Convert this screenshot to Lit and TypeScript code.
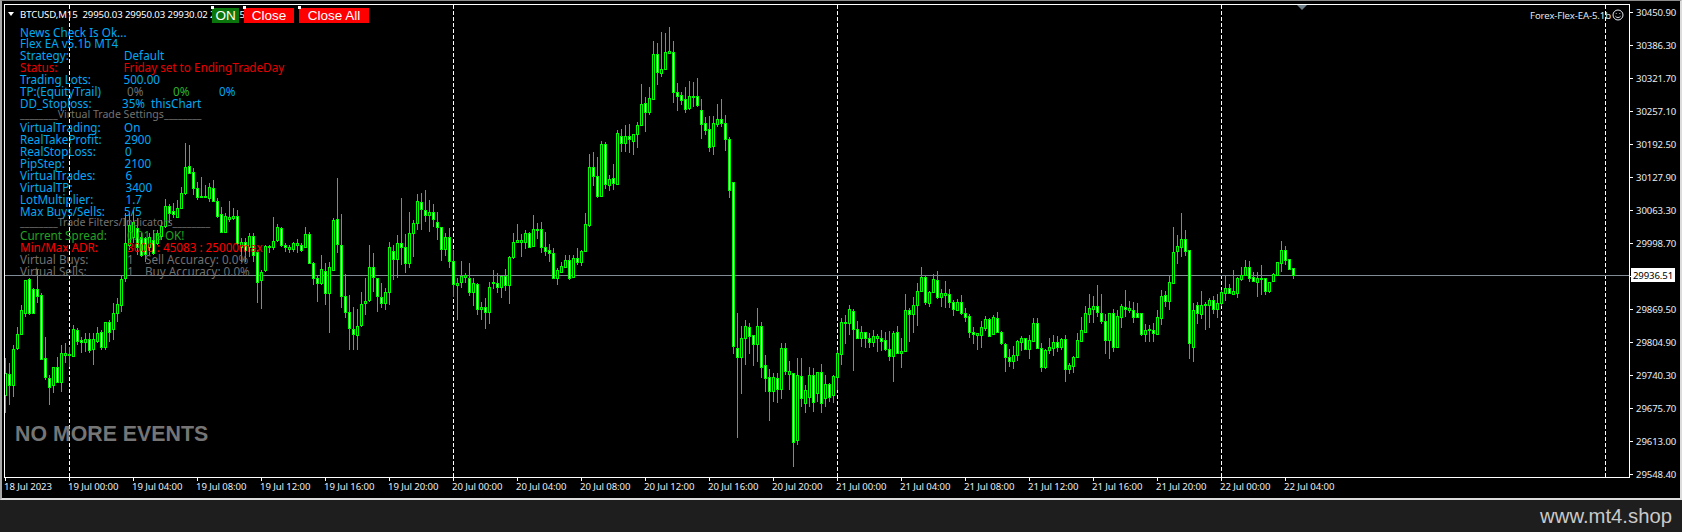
import { LitElement, html, css, svg } from "lit";
import { customElement } from "lit/decorators.js";

type C = [number, number, number, number, number];
// each candle: high, body top, body bottom, low, white fill; y in 3x crop units
const SEG_A: C[] = [
    [685,730,795,850,0],[700,733,765,825,1],[645,657,765,800,0],[590,612,655,660,0],[525,540,612,615,0],[450,450,548,560,0],[445,448,548,555,1],[475,477,548,550,1],[420,478,497,520,1],[490,495,687,690,1],
    [620,685,742,750,1],[735,745,770,825,1],[710,712,765,790,0],[680,712,757,760,1],[645,670,757,785,0],[640,670,674,700,0],[650,673,676,710,0],[585,597,678,680,0],[595,600,632,645,1],[620,630,636,670,1],
    [610,628,635,665,0],[610,627,660,670,1],[610,627,658,705,0],[590,610,632,640,0],[600,607,650,660,1],[575,577,650,660,0],[570,577,607,635,1],[520,550,598,630,0],[505,522,550,575,0],[435,447,526,545,0],
    [250,340,445,455,0],[250,285,345,360,0],[240,275,320,340,0],[265,295,350,375,1],[310,320,375,380,1],[320,325,372,395,1],[310,320,352,375,0],[300,330,368,375,1],[300,310,340,345,0],[270,288,317,330,0],
    [207,228,288,295,0],[222,228,250,280,1],[220,243,252,265,1],[210,235,262,265,0],[170,190,233,235,0],[40,112,190,195,0],[45,108,128,130,1],[115,127,175,195,1],[155,175,200,210,1],[140,198,201,205,0],
    [165,197,200,205,0],[160,172,203,215,0],[150,173,212,215,1],[205,213,257,265,1],[230,253,305,310,1],[250,258,305,310,0],[212,260,266,275,0],[235,258,265,270,0],[240,258,340,345,1],[325,335,350,395,0],
    [325,337,360,395,1],[310,317,350,380,0],[310,317,375,395,1],[360,365,455,520,1],[420,427,450,537,0],[345,348,420,425,0],[345,348,352,370,0],[262,332,352,360,0],[282,292,330,335,0],[290,294,345,350,1],
    [340,344,352,365,1],[345,352,356,370,0],[335,340,356,365,0],[328,340,344,370,0],[340,344,360,365,1],[290,313,352,355,0],[305,313,398,400,1],[395,398,445,465,1],[435,445,460,515,1],
    [375,418,460,465,0],[400,422,490,525,1],[395,412,490,610,0],[265,270,420,422,0],[145,268,342,370,1],[252,344,498,535,1],[432,497,545,565,1],[495,545,595,660,1],[530,598,612,660,1],[538,587,615,660,0],
    [487,523,585,590,0],[445,512,520,555,0],[345,410,510,515,0],[370,412,442,485,1],[445,445,498,545,1],[460,500,520,535,1],[475,485,520,540,0],[335,352,487,525,0],[345,362,388,450,1],[315,338,388,445,0],
    [205,338,350,405,1],[312,350,400,430,1],[247,310,400,415,0],[270,280,310,380,0],[193,214,280,300,0],[190,215,238,300,1],[180,240,254,275,1],[210,245,254,305,0],[222,245,268,290,1],[247,275,292,330,1],
    [290,292,358,392,1],[310,322,358,378,0],[295,322,394,415,1],[360,394,463,500,1],[445,458,466,570,0],[393,437,457,475,0],[430,436,440,458,0],[400,443,487,497,1],[445,458,487,527,0],[460,461,538,555,1],
    [515,530,538,570,0],[503,532,547,597,1],[455,470,547,582,0],[420,457,460,477,0],[430,458,470,490,1],[437,437,470,503,0],[418,437,466,482,1],[378,382,466,522,0],[310,335,382,387,0],[282,331,335,338,0],
    [312,331,335,380,0],[300,310,335,357,0],[305,310,350,352,1],[255,298,347,347,0],[280,297,299,326,0],[277,298,352,370,1],[307,350,362,378,1],[343,361,368,395,1],[355,368,445,447,1],[415,420,443,465,0],
    [395,408,425,428,0],[376,391,410,413,0],[376,391,443,450,1],[376,385,440,443,0],[353,385,395,405,1],[360,364,395,408,0],[250,283,364,365,0],[72,112,284,290,0],[66,112,137,168,1],[82,137,197,205,1],
    [33,43,197,197,0],[37,43,163,178,1],[135,148,165,183,0],[102,145,160,180,1],[0,10,161,161,0],
];
const SEG_D: C[] = [
    [327,347,370,395,1],[315,348,370,395,0],[312,349,358,398,1],[342,343,362,405,0],[307,316,343,385,0],[192,253,316,318,0],[232,250,275,337,1],[202,235,275,285,0],[63,103,236,236,0],[68,103,157,195,1],
    [37,148,158,172,0],[40,97,148,150,0],[22,94,98,102,0],[63,95,215,248,1],[190,215,227,272,1],[215,226,240,255,1],[200,238,267,278,1],[183,229,265,270,0],[186,229,231,262,0],[175,229,255,260,1],
    [237,271,311,357,1],[292,310,330,345,1],[288,327,380,397,1],[288,310,377,405,0],[252,298,312,322,0],[237,298,310,320,1],[285,310,358,392,1],[350,358,510,535,1],
];
const SEG_E: C[] = [
    [65,65,557,582,1],[460,565,590,833,1],[498,535,590,702,0],[480,499,535,615,0],[488,502,527,582,1],[525,526,552,618,1],[445,499,552,606,0],[486,499,620,654,1],[585,616,653,696,1],[627,652,692,783,1],
    [640,650,692,726,0],[640,653,686,729,1],[550,565,686,717,0],
];
const SEG_B: C[] = [
  [280,295,362,375,1],[333,362,373,420,0],[370,370,576,651,1],[325,376,570,585,0],[323,377,445,470,1],[405,420,460,490,0],[352,375,440,470,0],[354,375,455,485,1],[365,367,430,455,0],[342,367,460,490,1],
  [375,403,445,470,0],[400,403,440,455,1],[375,378,435,460,0],[300,310,380,420,0],[205,217,311,345,0],[195,217,219,282,0],[165,178,218,255,0],[178,183,238,362,1],[213,238,263,265,1],[228,247,263,290,0],
  [245,247,263,293,1],[250,263,275,295,1],[240,259,275,292,0],[253,259,265,305,0],[240,263,272,302,1],[247,270,298,302,1],[243,298,317,332,1],[243,250,317,395,0],[228,247,308,312,1],[265,302,308,353,0],
  [132,181,302,303,0],[175,181,193,275,1],[140,166,191,250,0],[100,124,166,228,0],[52,82,124,127,0],[78,82,157,165,1],[123,127,160,170,0],[72,88,127,127,0],[63,91,140,148,1],[117,130,140,170,0],
  [94,130,134,175,0],[118,133,155,175,1],[150,155,178,197,1],[148,157,180,182,0],[135,157,190,195,1],[175,190,200,215,1],[192,198,245,263,1],[232,245,253,282,1],[250,250,254,300,0],[212,232,254,293,0],
  [198,208,233,243,0],[205,208,257,260,1],[195,200,253,255,0],[186,203,245,245,1],[243,245,280,285,1],[280,281,320,365,1],[297,322,332,350,1],[288,316,332,357,0],[270,274,316,333,0],[257,265,275,302,0],
  [265,265,297,300,1],[255,271,297,327,0],[205,220,272,275,0],[205,220,293,297,1],[280,293,352,365,1],[298,300,352,357,0],[265,292,300,312,0],[255,277,293,318,0],[258,277,290,305,1],[265,268,290,300,0],
  [255,268,356,395,1],[340,346,356,372,0],[318,322,347,370,0],[250,271,322,325,0],
];
const SEG_C: C[] = [
  [950,991,1022,1027,0],[918,940,995,995,0],[882,925,941,970,0],[888,919,926,970,0],[855,919,935,950,1],[882,940,962,972,1],[942,964,1020,1062,1],[938,940,1020,1077,0],[927,940,1040,1055,1],[930,949,1041,1043,0],
  [912,919,950,985,0],[870,921,928,950,1],[903,925,929,938,0],[906,929,950,970,1],[908,940,950,955,1],[940,940,1001,1008,1],[973,989,1001,1026,0],[975,988,991,1026,0],[970,989,998,1026,1],[930,952,1001,1002,0],
  [870,889,953,975,0],[873,886,902,922,1],[826,847,902,930,0],[682,757,848,850,0],[706,739,752,792,0],[640,718,740,770,0],[690,718,752,768,1],[750,751,1028,1077,1],[910,931,1040,1086,0],[905,916,940,972,1],
  [873,916,941,958,0],[905,912,916,990,0],[895,901,914,984,0],[888,901,926,942,1],[882,910,926,954,0],[870,877,908,918,0],[826,865,878,904,0],[852,865,878,882,1],[810,874,881,884,0],[832,835,878,894,0],
  [801,826,836,842,0],[780,802,826,828,0],[783,802,834,846,1],[816,832,842,844,1],[816,835,845,890,0],[796,835,838,885,0],[834,835,872,884,1],[846,847,872,880,0],[820,823,842,843,0],[786,787,824,826,0],
  [723,751,788,816,0],[738,751,780,795,1],[777,778,806,808,1],[804,805,826,836,1],
];

interface Bar { hi: number; top: number; bot: number; lo: number; white: boolean; }

function toBars(): Bar[] {
  const out: Bar[] = [];
  const add = (c: C, y0: number) => {
    const f = (v: number) => Math.round(y0 + v / 3);
    out.push({ hi: f(c[0]), top: f(c[1]), bot: f(c[2]), lo: f(c[3]), white: c[4] === 1 });
  };
  SEG_A.forEach((c) => add(c, 130));
  SEG_D.forEach((c) => add(c, 20));
  SEG_E.forEach((c) => add(c, 160));
  SEG_B.forEach((c) => add(c, 250));
  SEG_C.forEach((c) => add(c, 0));
  return out;
}

const BARS = toBars();
const GREEN = "#00ff00";
const WICK = "#00e400";

function candles() {
  return BARS.map((b, i) => {
    const x = 5 + 4 * i;
    const h = Math.max(b.bot - b.top, 1);
    return svg`<rect x=${x} y=${b.hi} width="1" height=${Math.max(b.lo - b.hi, 1)} fill=${WICK}></rect>
      <rect x=${x - 1} y=${b.top} width="3" height=${h + 1} fill=${GREEN}></rect>
      ${h > 1 ? svg`<rect x=${x} y=${b.top + 1} width="1" height=${h - 1} fill=${b.white ? "#ffffff" : "#000000"}></rect>` : null}`;
  });
}

type Cell = { x: number; t: string; c?: string };
type Row = { cells: Cell[]; kind?: string };
const BLUE = "b", RED = "r", REDD = "rd", GRN = "g", GRY = "y", LGR = "lg";
const rows: Row[] = [
  { kind: "first", cells: [{ x: 20, t: "News Check Is Ok...", c: BLUE }] },
  { cells: [{ x: 20, t: "Flex EA v5.1b MT4", c: BLUE }] },
  { cells: [{ x: 20, t: "Strategy:", c: BLUE }, { x: 124, t: "Default", c: BLUE }] },
  { cells: [{ x: 20, t: "Status:", c: REDD }, { x: 123.5, t: "Friday set to EndingTradeDay", c: REDD }] },
  { cells: [{ x: 20, t: "Trading Lots:", c: BLUE }, { x: 123.5, t: "500.00", c: BLUE }] },
  { cells: [{ x: 20, t: "TP:(EquityTrail)", c: BLUE }, { x: 127, t: "0%", c: GRY }, { x: 173, t: "0%", c: LGR }, { x: 219, t: "0%", c: BLUE }] },
  { cells: [{ x: 20, t: "DD_Stoploss:", c: BLUE }, { x: 122, t: "35%", c: BLUE }, { x: 151, t: "thisChart", c: BLUE }] },
  { kind: "sep", cells: [{ x: 20, t: "Virtual Trade Settings" }] },
  { cells: [{ x: 20, t: "VirtualTrading:", c: BLUE }, { x: 124, t: "On", c: BLUE }] },
  { cells: [{ x: 20, t: "RealTakeProfit:", c: BLUE }, { x: 124.5, t: "2900", c: BLUE }] },
  { cells: [{ x: 20, t: "RealStopLoss:", c: BLUE }, { x: 125, t: "0", c: BLUE }] },
  { cells: [{ x: 20, t: "PipStep:", c: BLUE }, { x: 124.5, t: "2100", c: BLUE }] },
  { cells: [{ x: 20, t: "VirtualTrades:", c: BLUE }, { x: 125.5, t: "6", c: BLUE }] },
  { cells: [{ x: 20, t: "VirtualTP:", c: BLUE }, { x: 125.5, t: "3400", c: BLUE }] },
  { cells: [{ x: 20, t: "LotMultiplier:", c: BLUE }, { x: 125.5, t: "1.7", c: BLUE }] },
  { cells: [{ x: 20, t: "Max Buys/Sells:", c: BLUE }, { x: 124, t: "5/5", c: BLUE }] },
  { kind: "sep", cells: [{ x: 20, t: "Trade Filters/Indicators" }] },
  { cells: [{ x: 20, t: "Current Spread:", c: GRN }, { x: 127, t: "0.01 is OK!", c: GRN }] },
  { cells: [{ x: 20, t: "Min/Max ADR:", c: RED }, { x: 127, t: "3000 : 45083 : 25000max", c: RED }] },
  { cells: [{ x: 20, t: "Virtual Buys:", c: GRY }, { x: 127, t: "1", c: GRY }, { x: 145, t: "Sell Accuracy: 0.0%", c: GRY }] },
  { cells: [{ x: 20, t: "Virtual Sells:", c: GRY }, { x: 127, t: "1", c: GRY }, { x: 145, t: "Buy Accuracy: 0.0%", c: GRY }] },
];

const prices = ["30450.90","30386.30","30321.70","30257.10","30192.50","30127.90","30063.30","29998.70","","29869.50","29804.90","29740.30","29675.70","29613.00","29548.40"];
const times: string[] = ["18 Jul 2023"];
["19", "20", "21"].forEach((d) => ["00:00","04:00","08:00","12:00","16:00","20:00"].forEach((h) => times.push(`${d} Jul ${h}`)));
times.push("22 Jul 00:00", "22 Jul 04:00");
const DASH_X = [69, 453, 837, 1221, 1605];

@customElement("app-root")
export class AppRoot extends LitElement {
  static styles = css`
    :host { display: block; width: 1682px; height: 532px; background: #1e1e1e; overflow: hidden; font-family: "Noto Sans", sans-serif; }
    .window { box-sizing: border-box; height: 500px; background: #000; display: flex; border-top: 1px solid #8c8c8c; border-left: 2px solid #a8a8a8; border-right: 2px solid #dcdcdc; border-bottom: 2px solid #dcdcdc; }
    .left { width: 1628px; flex: none; padding: 3px 0 0 2px; box-sizing: border-box; display: flex; flex-direction: column; }
    .plot { position: relative; width: 1626px; height: 474px; flex: none; box-sizing: border-box; border: 1px solid #fff; overflow: hidden; }
    .plot svg { display: block; }
    .times { display: flex; padding-left: 1px; color: #e6edf5; font-size: 9.6px; letter-spacing: -0.1px; }
    .time { width: 64px; flex: none; white-space: nowrap; }
    .tick { width: 1px; height: 3px; background: #fff; }
    .time span { display: block; margin-left: -1px; line-height: 12px; }
    .axis { position: relative; width: 50px; flex: none; display: flex; flex-direction: column; gap: 22px; padding-top: 6px; color: #e6edf5; font-size: 9.6px; letter-spacing: -0.1px; }
    .price { height: 11px; display: flex; align-items: center; gap: 3px; }
    .ptick { width: 3px; height: 1px; background: #fff; flex: none; }
    .current { position: absolute; left: 1px; top: 267px; width: 44px; height: 14px; background: #fff; color: #000; display: flex; align-items: center; justify-content: center; font-size: 9.6px; }
    .head { position: absolute; left: 3px; top: 2px; height: 14px; display: flex; align-items: center; color: #fff; font-size: 9.6px; white-space: pre; letter-spacing: -0.1px; }
    .tri { width: 0; height: 0; border-left: 3.5px solid transparent; border-right: 3.5px solid transparent; border-top: 4px solid #fff; margin-right: 6px; }
    .btns { position: absolute; left: 207px; top: 3px; display: flex; font-family: "Liberation Sans", sans-serif; font-size: 13.5px; color: #fff; }
    .btn { position: relative; height: 15px; line-height: 15px; text-align: center; }
    .btn::before { content: ""; position: absolute; left: -1px; top: -2px; width: 3px; height: 3px; background: #fff; }
    .on { width: 27px; background: #0a750a; margin-right: 5px; }
    .close { width: 50px; background: #f00; margin-right: 5px; }
    .closeall { width: 70px; background: #f00; }
    .ea { position: absolute; right: 5px; top: 3px; display: flex; align-items: center; gap: 1px; color: #dfe6ee; font-size: 9.6px; letter-spacing: -0.1px; height: 14px; }
    .mark { position: absolute; left: 1292px; top: 0; width: 0; height: 0; border-left: 5px solid transparent; border-right: 5px solid transparent; border-top: 5px solid #6f7f8a; }
    .panel { position: absolute; left: -5px; top: 21px; display: flex; flex-direction: column; font-size: 11.7px; }
    .row { height: 12px; line-height: 12px; display: flex; white-space: nowrap; padding-left: 20px; }
    .row.first { height: 11px; }
    .cell { flex: none; }
    .b { color: #00a8f4; } .r { color: #ff0000; } .rd { color: #e60000; } .g { color: #22a322; } .y { color: #707070; } .lg { color: #2fb52f; }
    .sep { color: #727272; font-size: 10.6px; line-height: 10px; }
    .events { position: absolute; left: 10px; top: 419px; font: bold 21.33px/20px "Liberation Sans", sans-serif; color: #757575; }
    .foot { height: 32px; display: flex; align-items: center; justify-content: flex-end; padding-right: 10px; color: #c9c9c9; font: 20.3px "Liberation Sans", sans-serif; }
  `;

  render() {
    return html`
      <div class="window">
        <div class="left">
          <div class="plot">
            <svg width="1624" height="472" viewBox="5 5 1624 472" shape-rendering="crispEdges">
              ${DASH_X.map((x) => svg`<line x1=${x + 0.5} x2=${x + 0.5} y1="5" y2="477" stroke="#fff" stroke-dasharray="4 2"></line>`)}
              <rect x="5" y="275" width="1624" height="1" fill="#808b96"></rect>
              ${candles()}
            </svg>
            <div class="mark"></div>
            <div class="head"><span class="tri"></span>BTCUSD,M15  29950.03 29950.03 29930.02 29936.51</div>
            <div class="btns">
              <div class="btn on">ON</div>
              <div class="btn close">Close</div>
              <div class="btn closeall">Close All</div>
            </div>
            <div class="ea">Forex-Flex-EA-5.1b
              <svg width="12" height="12" viewBox="0 0 12 12" fill="none" stroke="#e6edf5" shape-rendering="geometricPrecision">
                <circle cx="6" cy="6" r="5"></circle>
                <circle cx="4.2" cy="4.6" r="0.5" fill="#e6edf5" stroke="none"></circle>
                <circle cx="7.8" cy="4.6" r="0.5" fill="#e6edf5" stroke="none"></circle>
                <path d="M3.4 7.2C4.4 9 7.6 9 8.6 7.2" stroke-width="0.9"></path>
              </svg>
            </div>
            <div class="panel">${rows.map((r) => this.renderRow(r))}</div>
            <div class="events">NO MORE EVENTS</div>
          </div>
          <div class="times">
            ${times.map((t) => html`<div class="time"><div class="tick"></div><span>${t}</span></div>`)}
          </div>
        </div>
        <div class="axis">
          ${prices.map((p) => html`<div class="price"><div class="ptick"></div><span>${p}</span></div>`)}
          <div class="current">29936.51</div>
        </div>
      </div>
      <div class="foot">www.mt4.shop</div>
    `;
  }

  renderRow(r: Row) {
    if (r.kind === "sep") {
      return html`<div class="row sep">________${r.cells[0].t}________</div>`;
    }
    return html`<div class="row ${r.kind ?? ""}">
      ${r.cells.map((c, i) => {
        const next = r.cells[i + 1];
        return html`<span class="cell ${c.c ?? ""}" style=${next ? `width:${next.x - c.x}px` : ""}>${c.t}</span>`;
      })}
    </div>`;
  }
}
